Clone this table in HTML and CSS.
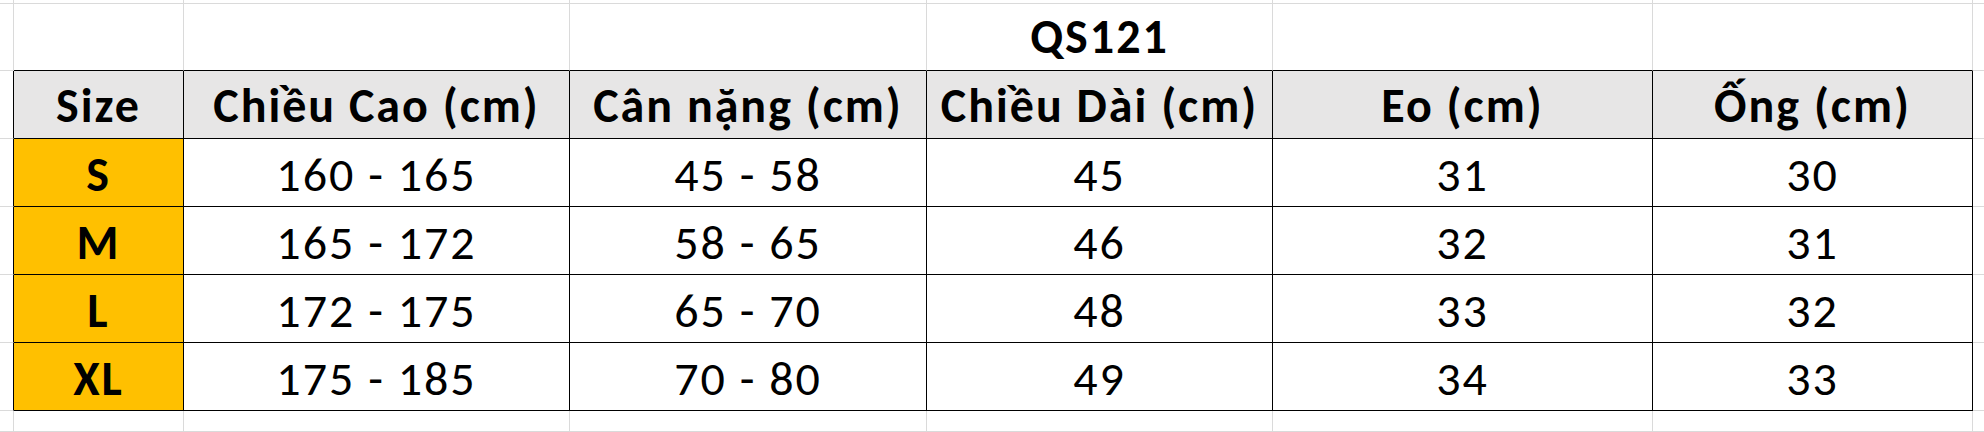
FILE: index.html
```html
<!DOCTYPE html>
<html lang="vi">
<head>
<meta charset="utf-8">
<title>QS121</title>
<link rel="stylesheet" href="styles.css">
</head>
<body>
<div class="sheet">
  <!-- row 0 -->
  <div class="c r0"></div><div class="c r0"></div><div class="c r0"></div><div class="c r0"></div><div class="c r0"></div><div class="c r0"></div><div class="c r0"></div><div class="c r0 end"></div>
  <!-- row 1 : title -->
  <div class="c"></div>
  <div class="c above"></div>
  <div class="c above"></div>
  <div class="c above"></div>
  <div class="c above title">QS121</div>
  <div class="c above"></div>
  <div class="c above"></div>
  <div class="c end"></div>
  <!-- header -->
  <div class="c left"></div>
  <div class="c t h">Size</div>
  <div class="c t h">Chiều Cao (cm)</div>
  <div class="c t h">Cân nặng (cm)</div>
  <div class="c t h">Chiều Dài (cm)</div>
  <div class="c t h">Eo (cm)</div>
  <div class="c t h">Ống (cm)</div>
  <div class="c end"></div>
  <!-- S -->
  <div class="c left"></div>
  <div class="c t s">S</div>
  <div class="c t d">160 - 165</div>
  <div class="c t d">45 - 58</div>
  <div class="c t d">45</div>
  <div class="c t d">31</div>
  <div class="c t d">30</div>
  <div class="c end"></div>
  <!-- M -->
  <div class="c left"></div>
  <div class="c t s">M</div>
  <div class="c t d">165 - 172</div>
  <div class="c t d">58 - 65</div>
  <div class="c t d">46</div>
  <div class="c t d">32</div>
  <div class="c t d">31</div>
  <div class="c end"></div>
  <!-- L -->
  <div class="c left"></div>
  <div class="c t s">L</div>
  <div class="c t d">172 - 175</div>
  <div class="c t d">65 - 70</div>
  <div class="c t d">48</div>
  <div class="c t d">33</div>
  <div class="c t d">32</div>
  <div class="c end"></div>
  <!-- XL -->
  <div class="c left"></div>
  <div class="c t s">XL</div>
  <div class="c t d">175 - 185</div>
  <div class="c t d">70 - 80</div>
  <div class="c t d">49</div>
  <div class="c t d">34</div>
  <div class="c t d">33</div>
  <div class="c end"></div>
  <!-- below -->
  <div class="c"></div><div class="c"></div><div class="c"></div><div class="c"></div><div class="c"></div><div class="c"></div><div class="c"></div><div class="c end"></div>
</div>
</body>
</html>
```

FILE: styles.css
```css
html, body {
  margin: 0;
  padding: 0;
  background: #ffffff;
}

body {
  width: 1984px;
  height: 432px;
  overflow: hidden;
  font-family: "Carlito", "Lato", sans-serif;
  color: #000000;
}

.sheet {
  display: grid;
  grid-template-columns: 14px 170px 386px 357px 346px 380px 320px 11px;
  grid-template-rows: 4px 67px 68px 68px 68px 68px 68px 21px;
}

.c {
  box-sizing: border-box;
  border-right: 1px solid #dadada;
  border-bottom: 1px solid #dadada;
  display: flex;
  align-items: center;
  justify-content: center;
  font-size: 48px;
  line-height: 1;
  letter-spacing: 2px;
  white-space: nowrap;
}

.end {
  border-right: none;
}

.above {
  border-bottom-color: #000000;
}

.left {
  border-right-color: #000000;
}

.t {
  border-right-color: #000000;
  border-bottom-color: #000000;
}

.title {
  font-weight: 700;
  align-items: flex-end;
  padding-bottom: 9px;
}

.h {
  background: #e7e6e6;
  font-weight: 700;
  padding-top: 2px;
}

.s {
  background: #ffc000;
  font-weight: 700;
  padding-top: 4px;
}

.d {
  font-weight: 400;
  padding-top: 4px;
}
```
